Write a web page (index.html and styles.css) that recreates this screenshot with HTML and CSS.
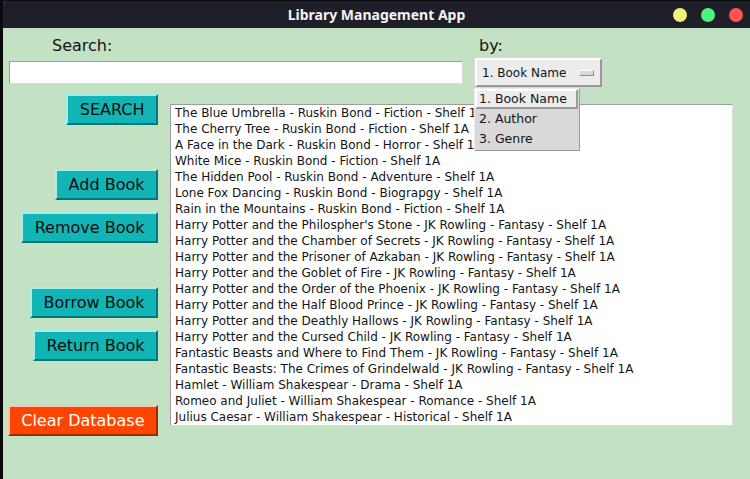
FILE: index.html
```html
<!DOCTYPE html>
<html lang="en">
<head>
<meta charset="utf-8">
<title>Library Management App</title>
<link rel="stylesheet" href="styles.css">
</head>
<body>
<div class="window">
  <div class="titlebar">
    <div></div>
    <div class="title">Library Management App</div>
    <div class="controls">
      <span class="dot dot-min"></span>
      <span class="dot dot-max"></span>
      <span class="dot dot-close"></span>
    </div>
  </div>
  <div class="content">
    <div class="header">
      <div class="search-col">
        <div class="label search-label">Search:</div>
        <div class="entry"></div>
      </div>
      <div class="by-col">
        <div class="label by-label">by:</div>
        <div class="optionmenu">
          <span class="opt-text">1. Book Name</span>
          <span class="opt-indicator"></span>
          <div class="menu">
            <div class="menu-item active">1. Book Name</div>
            <div class="menu-item">2. Author</div>
            <div class="menu-item">3. Genre</div>
          </div>
        </div>
      </div>
    </div>
    <div class="main">
      <div class="sidebar">
        <div class="btn">SEARCH</div>
        <div class="btn gap-lg">Add Book</div>
        <div class="btn gap-sm">Remove Book</div>
        <div class="btn gap-lg">Borrow Book</div>
        <div class="btn gap-sm">Return Book</div>
        <div class="btn btn-danger gap-lg">Clear Database</div>
      </div>
      <div class="listbox">
        <div class="row">The Blue Umbrella - Ruskin Bond - Fiction - Shelf 1A</div>
        <div class="row">The Cherry Tree - Ruskin Bond - Fiction - Shelf 1A</div>
        <div class="row">A Face in the Dark - Ruskin Bond - Horror - Shelf 1A</div>
        <div class="row">White Mice - Ruskin Bond - Fiction - Shelf 1A</div>
        <div class="row">The Hidden Pool - Ruskin Bond - Adventure - Shelf 1A</div>
        <div class="row">Lone Fox Dancing - Ruskin Bond - Biograpgy - Shelf 1A</div>
        <div class="row">Rain in the Mountains - Ruskin Bond - Fiction - Shelf 1A</div>
        <div class="row">Harry Potter and the Philospher's Stone - JK Rowling - Fantasy - Shelf 1A</div>
        <div class="row">Harry Potter and the Chamber of Secrets - JK Rowling - Fantasy - Shelf 1A</div>
        <div class="row">Harry Potter and the Prisoner of Azkaban - JK Rowling - Fantasy - Shelf 1A</div>
        <div class="row">Harry Potter and the Goblet of Fire - JK Rowling - Fantasy - Shelf 1A</div>
        <div class="row">Harry Potter and the Order of the Phoenix - JK Rowling - Fantasy - Shelf 1A</div>
        <div class="row">Harry Potter and the Half Blood Prince - JK Rowling - Fantasy - Shelf 1A</div>
        <div class="row">Harry Potter and the Deathly Hallows - JK Rowling - Fantasy - Shelf 1A</div>
        <div class="row">Harry Potter and the Cursed Child - JK Rowling - Fantasy - Shelf 1A</div>
        <div class="row">Fantastic Beasts and Where to Find Them - JK Rowling - Fantasy - Shelf 1A</div>
        <div class="row">Fantastic Beasts: The Crimes of Grindelwald - JK Rowling - Fantasy - Shelf 1A</div>
        <div class="row">Hamlet - William Shakespear - Drama - Shelf 1A</div>
        <div class="row">Romeo and Juliet - William Shakespear - Romance - Shelf 1A</div>
        <div class="row">Julius Caesar - William Shakespear - Historical - Shelf 1A</div>
      </div>
    </div>
  </div>
</div>
</body>
</html>
```
FILE: styles.css
```css
* { box-sizing: border-box; }

html, body {
  margin: 0;
  width: 750px;
  height: 479px;
  overflow: hidden;
  background: #0b0b0d;
  font-family: "DejaVu Sans", sans-serif;
}

.window {
  position: absolute;
  left: 3px;
  top: 1px;
  right: 0;
  bottom: 0;
  display: flex;
  flex-direction: column;
  background: #c3e1c3;
  border-top-left-radius: 4px;
  overflow: hidden;
}

.titlebar {
  height: 27px;
  flex: none;
  background: #1e1f29;
  display: grid;
  grid-template-columns: 1fr auto 1fr;
  align-items: center;
}

.title {
  font-family: "Noto Sans", sans-serif;
  font-weight: bold;
  font-size: 14px;
  color: #f4f4f4;
}

.controls {
  justify-self: end;
  display: flex;
  gap: 14px;
  padding-right: 7px;
}

.dot {
  width: 14px;
  height: 14px;
  border-radius: 50%;
  display: block;
}
.dot-min { background: #f1f37b; }
.dot-max { background: #4cf47c; }
.dot-close { background: #ff5252; }

.content {
  flex: 1;
  background: #c3e1c3;
}

.header {
  display: flex;
  padding-left: 6px;
  height: 59px;
}

.label {
  font-size: 16px;
  line-height: 19px;
  color: #141414;
  margin-top: 8px;
}

.search-col {
  width: 454px;
  display: flex;
  flex-direction: column;
}
.search-label { margin-left: 43px; }

.entry {
  margin-top: 6px;
  height: 23px;
  background: #ffffff;
  border: 1px solid;
  border-color: #9c9ca2 #dcdcdc #dcdcdc #9c9ca2;
}

.by-col {
  margin-left: 12px;
  display: flex;
  flex-direction: column;
}
.by-label { margin-left: 4px; }

.optionmenu {
  position: relative;
  margin-top: 3px;
  width: 127px;
  height: 29px;
  background: #ececec;
  border: 2px solid;
  border-color: #ffffff #9a9a9a #9a9a9a #ffffff;
  box-shadow: 0 0 0 1px #d6d6d6;
  display: flex;
  align-items: center;
  padding-left: 5px;
  font-size: 12px;
  color: #141414;
}

.opt-indicator {
  margin-left: auto;
  margin-right: 6px;
  width: 15px;
  height: 6px;
  background: #d9d9d9;
  border: 1px solid;
  border-color: #ffffff #8e8e8e #8e8e8e #ffffff;
}

.menu {
  position: absolute;
  left: -3px;
  top: 28px;
  width: 106px;
  background: #d9d9d9;
  border: 1px solid;
  border-color: #ececec #9a9a9a #9a9a9a #ececec;
  padding: 0 1px 1px 0;
  z-index: 2;
}

.menu-item {
  height: 20px;
  line-height: 16px;
  padding-left: 2px;
  border: 2px solid transparent;
  font-size: 12.5px;
  color: #141414;
}
.menu-item.active {
  background: #ececec;
  border-color: #ffffff #9a9a9a #9a9a9a #ffffff;
}

.main {
  display: flex;
  margin-top: 7px;
}

.sidebar {
  width: 155px;
  display: flex;
  flex-direction: column;
  align-items: flex-end;
}

.btn {
  height: 31px;
  padding: 0 11.5px;
  background: #11b5b5;
  border: 2px solid;
  border-color: #a9ecec #08757a #08757a #a9ecec;
  font-size: 16px;
  line-height: 27px;
  color: #0d0d0d;
  white-space: nowrap;
}
.btn-danger {
  background: #ff4500;
  color: #ffffff;
  border-color: #ffc2b0 #a02a00 #a02a00 #ffc2b0;
}
.gap-lg { margin-top: 44px; }
.gap-sm { margin-top: 12px; }

.listbox {
  margin-left: 12px;
  margin-top: 10px;
  width: 563px;
  height: 322px;
  background: #ffffff;
  border: 1px solid;
  border-color: #9c9ca2 #dcdcdc #dcdcdc #9c9ca2;
  padding: 0 0 0 4px;
  overflow: hidden;
}

.row {
  font-size: 12px;
  line-height: 16px;
  color: #141414;
  white-space: nowrap;
}
```
